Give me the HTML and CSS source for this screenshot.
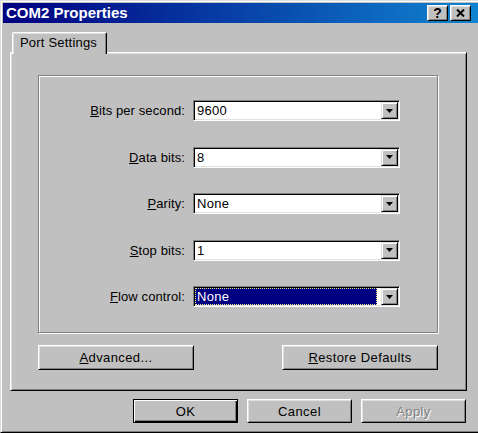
FILE: index.html
```html
<!DOCTYPE html>
<html>
<head>
<meta charset="utf-8">
<title>COM2 Properties</title>
<link rel="stylesheet" href="styles.css">
</head>
<body>
<div class="window">
  <div class="titlebar">
    <span class="title">COM2 Properties</span>
    <div class="caption-btns">
      <button class="cap-btn help">?</button>
      <button class="cap-btn close">
        <svg width="9" height="8" viewBox="0 0 9 8"><path d="M1 0.5 L8 7.5 M8 0.5 L1 7.5" stroke="#000" stroke-width="2"/></svg>
      </button>
    </div>
  </div>
  <div class="content">
    <div class="tabs"><div class="tab">Port Settings</div></div>
    <div class="panel">
      <div class="group">
        <div class="form">
          <label class="lbl"><u>B</u>its per second:</label>
          <div class="combo"><div class="value">9600</div><div class="combo-btn"><svg width="7" height="4" viewBox="0 0 7 4"><path d="M0 0H7L3.5 4Z" fill="#000"/></svg></div></div>
          <label class="lbl"><u>D</u>ata bits:</label>
          <div class="combo"><div class="value">8</div><div class="combo-btn"><svg width="7" height="4" viewBox="0 0 7 4"><path d="M0 0H7L3.5 4Z" fill="#000"/></svg></div></div>
          <label class="lbl"><u>P</u>arity:</label>
          <div class="combo"><div class="value">None</div><div class="combo-btn"><svg width="7" height="4" viewBox="0 0 7 4"><path d="M0 0H7L3.5 4Z" fill="#000"/></svg></div></div>
          <label class="lbl"><u>S</u>top bits:</label>
          <div class="combo"><div class="value">1</div><div class="combo-btn"><svg width="7" height="4" viewBox="0 0 7 4"><path d="M0 0H7L3.5 4Z" fill="#000"/></svg></div></div>
          <label class="lbl"><u>F</u>low control:</label>
          <div class="combo"><div class="value selected">None</div><div class="combo-btn"><svg width="7" height="4" viewBox="0 0 7 4"><path d="M0 0H7L3.5 4Z" fill="#000"/></svg></div></div>
        </div>
      </div>
      <div class="panel-actions">
        <button class="btn wide"><u>A</u>dvanced...</button>
        <button class="btn wide"><u>R</u>estore Defaults</button>
      </div>
    </div>
    <div class="footer">
      <button class="btn default">OK</button>
      <button class="btn">Cancel</button>
      <button class="btn disabled">Apply</button>
    </div>
  </div>
</div>
</body>
</html>
```
FILE: styles.css
```css
* { box-sizing: border-box; }
html, body { margin: 0; padding: 0; }
body {
  width: 478px;
  height: 433px;
  overflow: hidden;
  background: #c0c0c0;
  font-family: "Liberation Sans", Arial, sans-serif;
  font-size: 13px;
  color: #000;
}
.window {
  width: 482px;
  height: 433px;
  background: #c0c0c0;
  border: 1px solid;
  border-color: #dfdfdf #000 #000 #dfdfdf;
  box-shadow: inset 1px 1px #fff, inset -1px -1px #808080;
  padding: 2px;
  display: flex;
  flex-direction: column;
}
.titlebar {
  height: 20px;
  flex: none;
  background: linear-gradient(to right, #000080, #1084d0);
  display: flex;
  align-items: center;
  justify-content: space-between;
  padding: 0 8px 0 3px;
  color: #fff;
}
.title {
  font-weight: bold;
  font-size: 15px;
  line-height: 18px;
}
.caption-btns { display: flex; gap: 2px; }
.cap-btn {
  width: 21px;
  height: 16px;
  padding: 0;
  background: #c0c0c0;
  border: 1px solid;
  border-color: #fff #000 #000 #fff;
  box-shadow: inset 1px 1px #dfdfdf, inset -1px -1px #808080;
  display: flex;
  align-items: center;
  justify-content: center;
  font-family: "Liberation Sans", Arial, sans-serif;
}
.cap-btn.help {
  font-weight: bold;
  font-size: 14px;
  line-height: 14px;
  color: #000;
}
.content {
  flex: 1;
  padding: 9px 12px 0 7px;
  display: flex;
  flex-direction: column;
}
.tabs { display: flex; padding-left: 2px; }
.tab {
  width: 95px;
  height: 22px;
  margin-bottom: -2px;
  position: relative;
  z-index: 1;
  background: #c0c0c0;
  border-top: 1px solid #fff;
  border-left: 1px solid #fff;
  border-right: 1px solid #000;
  border-radius: 2px 2px 0 0;
  box-shadow: inset -1px 0 #808080, inset 1px 1px #dfdfdf;
  padding: 2px 0 0 7px;
  line-height: 15px;
  letter-spacing: 0.2px;
}
.panel {
  width: 457px;
  height: 339px;
  border: 1px solid;
  border-color: #fff #000 #000 #fff;
  box-shadow: inset 1px 1px #dfdfdf, inset -1px -1px #808080;
  padding: 22px 0 0 27px;
  display: flex;
  flex-direction: column;
}
.group {
  width: 400px;
  height: 258px;
  border: 1px solid #808080;
  box-shadow: inset 1px 1px #fff, 1px 1px #fff;
  padding-top: 24px;
}
.form {
  display: grid;
  grid-template-columns: 146px 207px;
  column-gap: 8px;
  row-gap: 25.5px;
  align-items: center;
}
.lbl {
  text-align: right;
  letter-spacing: 0.1px;
  line-height: 15px;
}
.combo {
  height: 21px;
  background: #fff;
  border: 1px solid;
  border-color: #808080 #fff #fff #808080;
  box-shadow: inset 1px 1px #000, inset -1px -1px #dfdfdf;
  padding: 1px;
  display: flex;
  align-items: center;
}
.value {
  flex: 1;
  height: 17px;
  margin-right: 4px;
  padding-left: 2px;
  line-height: 17px;
  letter-spacing: 0.3px;
}
.value.selected {
  background: #000080;
  color: #fff;
  outline: 1px dotted #e8e890;
  outline-offset: -1px;
}
.combo-btn {
  width: 17px;
  height: 17px;
  flex: none;
  background: #c0c0c0;
  border: 1px solid;
  border-color: #dfdfdf #000 #000 #dfdfdf;
  box-shadow: inset 1px 1px #fff, inset -1px -1px #808080;
  display: flex;
  align-items: center;
  justify-content: center;
}
.combo-btn svg { display: block; }
.panel-actions {
  width: 400px;
  margin-top: 12px;
  display: flex;
  justify-content: space-between;
}
.btn {
  font-family: "Liberation Sans", Arial, sans-serif;
  font-size: 13px;
  letter-spacing: 0.4px;
  color: #000;
  background: #c0c0c0;
  border: 1px solid;
  border-color: #fff #000 #000 #fff;
  box-shadow: inset 1px 1px #dfdfdf, inset -1px -1px #808080;
  padding: 0;
  width: 105px;
  height: 24px;
}
.btn.wide { width: 156px; height: 25px; }
.btn.default {
  border-color: #000;
  box-shadow: inset 1px 1px #fff, inset -1px -1px #000, inset -2px -2px #808080;
}
.btn.disabled {
  color: #808080;
  text-shadow: 1px 1px 0 #fff;
}
.footer {
  width: 457px;
  margin-top: 8px;
  padding-right: 1px;
  display: flex;
  justify-content: flex-end;
  gap: 9px;
}
```
